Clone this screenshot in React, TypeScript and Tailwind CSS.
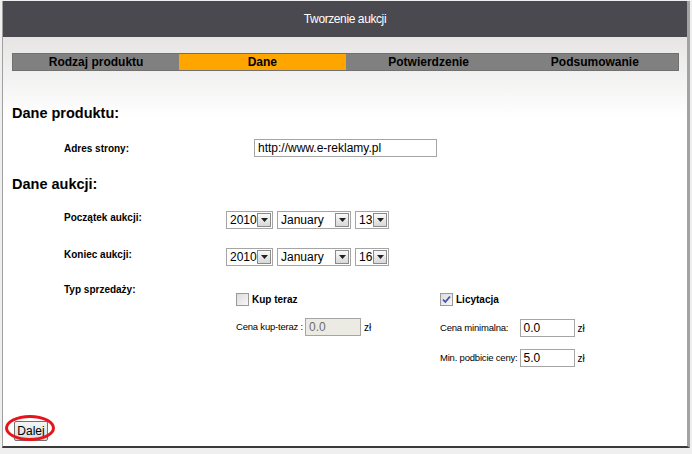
import React from "react";

const font = { fontFamily: '"Liberation Sans", Arial, sans-serif' };

const Select = ({ value, width }: { value: string; width: number }) => (
  <div
    className="flex items-center justify-between h-[18px] bg-white border border-[#a5a5a5] pl-[3px] pr-[1px]"
    style={{ width }}
  >
    <span className="text-[12px] leading-[14px] text-black">{value}</span>
    <span className="flex items-center justify-center w-[14px] h-[14px] border border-[#8a8a8a] bg-gradient-to-b from-[#fafafa] to-[#d8d8d8]">
      <svg width="7" height="4" viewBox="0 0 7 4">
        <path d="M0 0h7L3.5 4z" fill="#222" />
      </svg>
    </span>
  </div>
);

const Checkbox = ({ checked }: { checked?: boolean }) => (
  <span className="flex items-center justify-center w-[13px] h-[13px] border border-[#9a9a9a] bg-gradient-to-br from-[#dcdcdc] to-[#f8f8f8]">
    {checked && (
      <svg width="9" height="9" viewBox="0 0 9 9">
        <path d="M1 4.5l2.3 2.5L8 1.5" stroke="#3a4fb0" strokeWidth="1.8" fill="none" />
      </svg>
    )}
  </span>
);

const TextInput = ({ value, width, disabled }: { value: string; width: number; disabled?: boolean }) => (
  <div
    className={`shrink-0 h-[18px] border border-[#a5a5a5] pl-[3px] text-[12px] leading-[16px] ${
      disabled ? "bg-[#ebebe4] text-[#6d6d6d]" : "bg-white text-black"
    }`}
    style={{ width }}
  >
    {value}
  </div>
);

export default function App() {
  const tabs = ["Rodzaj produktu", "Dane", "Potwierdzenie", "Podsumowanie"];
  return (
    <div className="w-[692px] h-[454px] bg-[#efefef] pt-[1px] pl-[2px]" style={font}>
      <div className="w-[688px] h-[447px] flex flex-col border-l border-l-[#a0a0a0] border-r-[3px] border-r-[#a3a3a3] border-b-2 border-b-[#3a3a3a] bg-white">
        {/* Header */}
        <div className="h-[36px] shrink-0 bg-[#4a494f] flex items-center justify-center">
          <span className="text-white text-[12px] tracking-[-0.4px]">Tworzenie aukcji</span>
        </div>

        <div className="flex-1 flex flex-col bg-gradient-to-b from-[#e6e5e4] via-white via-[80px] to-white">
          {/* Steps */}
          <div className="mt-[16px] ml-[9px] mr-[8px] h-[18px] flex border border-[#707070] bg-[#808080]">
            {tabs.map((t) => (
              <div
                key={t}
                className={`flex-1 flex items-center justify-center text-[12px] font-bold text-black ${
                  t === "Dane" ? "bg-[#ffa500]" : ""
                }`}
              >
                {t}
              </div>
            ))}
          </div>

          <h2 className="mt-[34px] ml-[9px] text-[14.5px] leading-[16px] font-bold text-black">Dane produktu:</h2>

          <div className="mt-[18px] flex items-center h-[18px]">
            <span className="ml-[61px] w-[190px] text-[10px] font-bold text-black">Adres strony:</span>
            <TextInput value="http://www.e-reklamy.pl" width={183} />
          </div>

          <h2 className="mt-[19px] ml-[9px] text-[14.5px] leading-[16px] font-bold text-black">Dane aukcji:</h2>

          <div className="mt-[19px] flex items-start h-[18px]">
            <span className="ml-[61px] w-[162px] pt-[1px] text-[10px] leading-[12px] font-bold text-black">Początek aukcji:</span>
            <div className="flex gap-[4px]">
              <Select value="2010" width={47} />
              <Select value="January" width={74} />
              <Select value="13" width={34} />
            </div>
          </div>

          <div className="mt-[19px] flex items-start h-[18px]">
            <span className="ml-[61px] w-[162px] pt-[1px] text-[10px] leading-[12px] font-bold text-black">Koniec aukcji:</span>
            <div className="flex gap-[4px]">
              <Select value="2010" width={47} />
              <Select value="January" width={74} />
              <Select value="16" width={34} />
            </div>
          </div>

          <div className="mt-[18px] flex items-start">
            <span className="ml-[61px] w-[172px] shrink-0 text-[10px] leading-[12px] font-bold text-black">Typ sprzedaży:</span>

            <div className="w-[204px] shrink-0 pt-[8px] flex flex-col">
              <div className="flex items-center gap-[3px] h-[14px]">
                <Checkbox />
                <span className="text-[10px] font-bold text-black">Kup teraz</span>
              </div>
              <div className="mt-[12px] flex items-center gap-[2px]">
                <span className="text-[9.5px] tracking-[-0.2px] text-black whitespace-nowrap">Cena kup-teraz :</span>
                <TextInput value="0.0" width={56} disabled />
                <span className="ml-[1px] text-[10px] text-black">zł</span>
              </div>
            </div>

            <div className="pt-[8px] flex flex-col">
              <div className="flex items-center gap-[3px] h-[14px]">
                <Checkbox checked />
                <span className="text-[10px] font-bold text-black">Licytacja</span>
              </div>
              <div className="mt-[13px] grid grid-cols-[auto_auto_auto] gap-x-[2px] gap-y-[12px] items-center">
                <span className="text-[9.5px] tracking-[-0.2px] text-black whitespace-nowrap">Cena minimalna:</span>
                <TextInput value="0.0" width={55} />
                <span className="ml-[1px] text-[10px] text-black">zł</span>
                <span className="text-[9.5px] tracking-[-0.2px] text-black whitespace-nowrap">Min. podbicie ceny:</span>
                <TextInput value="5.0" width={55} />
                <span className="ml-[1px] text-[10px] text-black">zł</span>
              </div>
            </div>
          </div>

          <div className="mt-auto mb-[4px] ml-[11px] relative w-[34px]">
            <button className="h-[20px] w-[34px] border border-[#707070] rounded-[2px] bg-gradient-to-b from-[#f4f4f4] to-[#dcdcdc] text-[12px] text-black leading-[16px]">
              Dalej
            </button>
            <span className="absolute left-[-9px] top-[-3px] w-[50px] h-[26px] rounded-[50%] border-[3px] border-[#e8141c] pointer-events-none" />
          </div>
        </div>
      </div>
    </div>
  );
}
